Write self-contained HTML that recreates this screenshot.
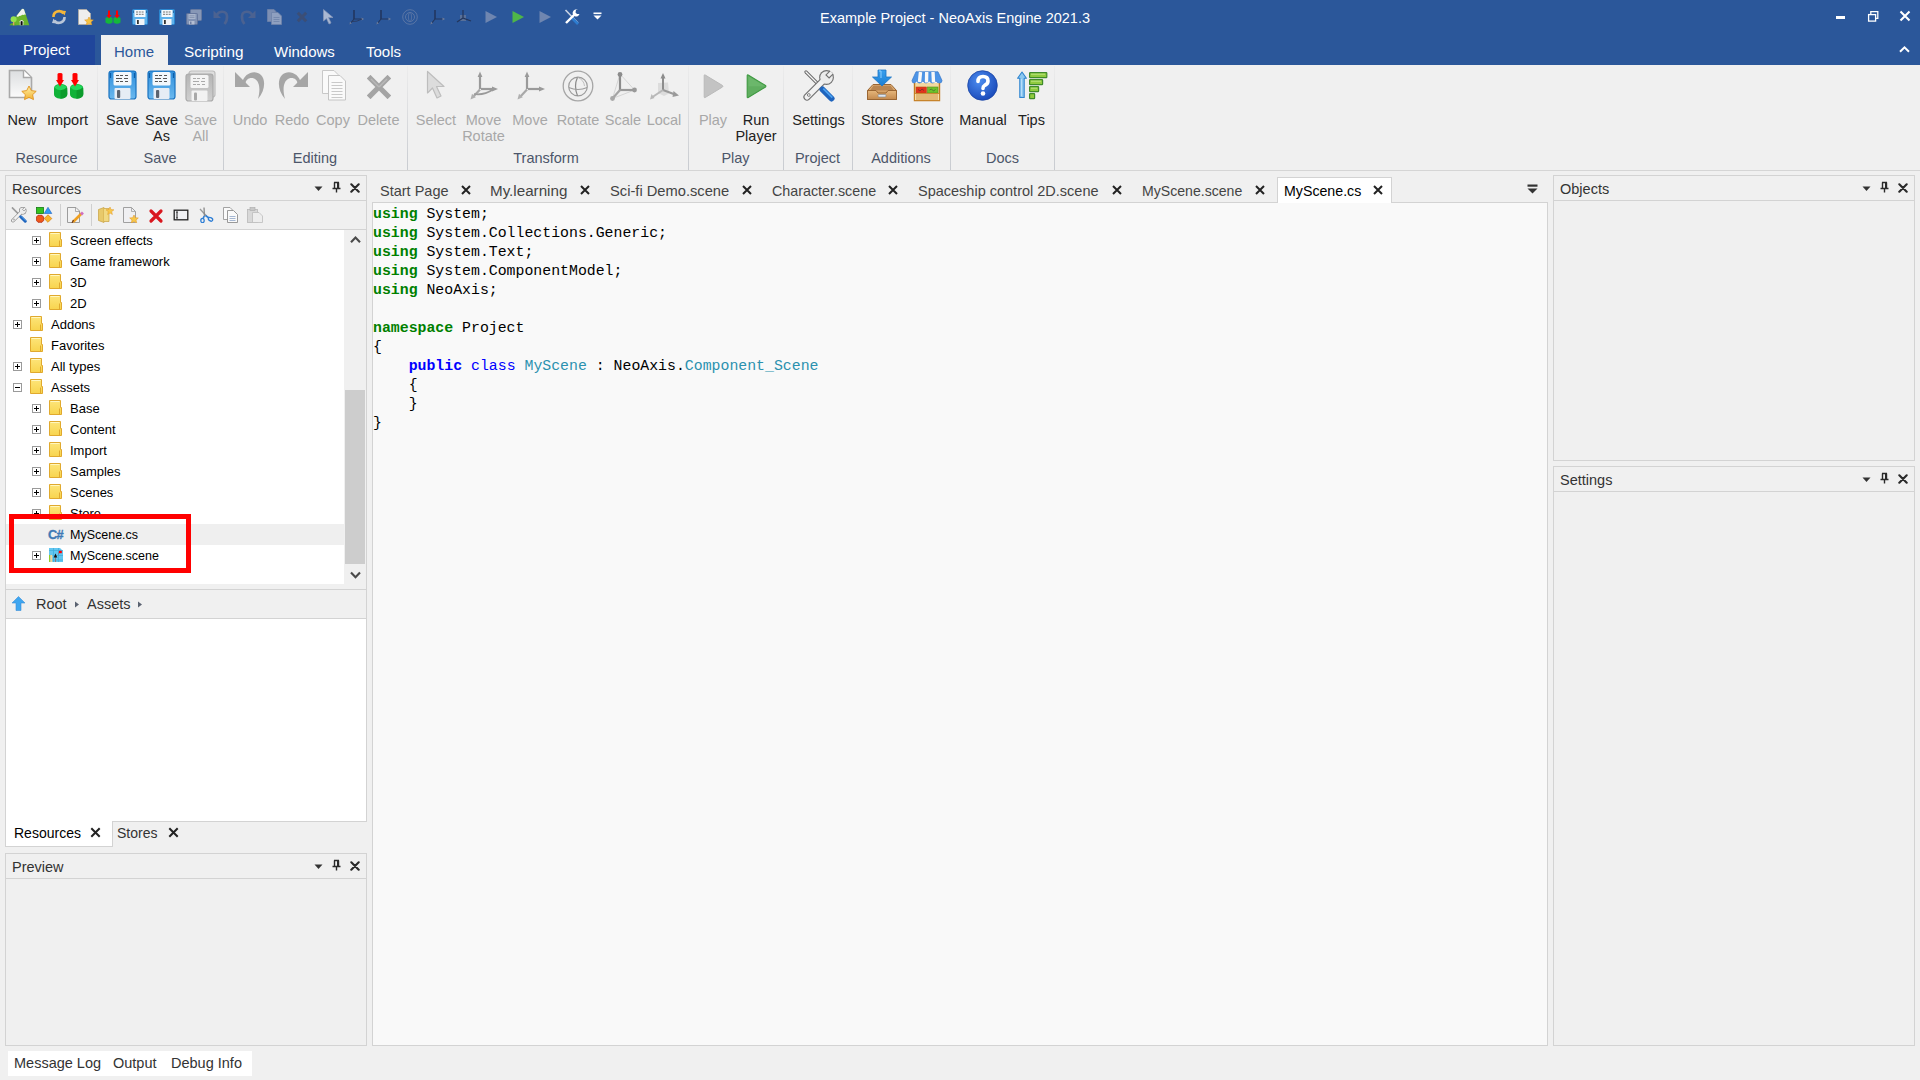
<!DOCTYPE html>
<html><head><meta charset="utf-8">
<style>
*{margin:0;padding:0;box-sizing:border-box}
html,body{width:1920px;height:1080px;overflow:hidden;background:#f0f0f0;font-family:"Liberation Sans",sans-serif;position:relative}
.a{position:absolute;display:block}
.t{position:absolute;white-space:nowrap;line-height:16px}
.code{font-family:"Liberation Mono",monospace;font-size:14.85px;line-height:19px;white-space:pre;color:#000}
.kw{color:#008000;font-weight:bold}
.kb{color:#0000ff;font-weight:bold}
.kc{color:#0000ff}
.ty{color:#2b91af}
</style></head><body>
<svg width="0" height="0" style="position:absolute"><defs>
<linearGradient id="gPage" x1="0" y1="0" x2="0" y2="1"><stop offset="0" stop-color="#dcdee0"/><stop offset="1" stop-color="#fbfbfb"/></linearGradient>
<linearGradient id="gStar" x1="0" y1="0" x2="0" y2="1"><stop offset="0" stop-color="#fff2a8"/><stop offset="1" stop-color="#f2b233"/></linearGradient>
<linearGradient id="gCube" x1="0" y1="0" x2="0" y2="1"><stop offset="0" stop-color="#1fd45a"/><stop offset="1" stop-color="#0aa82a"/></linearGradient>
<linearGradient id="gSave" x1="0" y1="0" x2="0" y2="1"><stop offset="0" stop-color="#2f8fdc"/><stop offset="1" stop-color="#6ab8ee"/></linearGradient>
<linearGradient id="gSaveG" x1="0" y1="0" x2="0" y2="1"><stop offset="0" stop-color="#b4b4b4"/><stop offset="1" stop-color="#cfcfcf"/></linearGradient>
<linearGradient id="gPlay" x1="0" y1="0" x2="1" y2="0"><stop offset="0" stop-color="#2fa83a"/><stop offset="1" stop-color="#5cc85a"/></linearGradient>
<linearGradient id="gBox" x1="0" y1="0" x2="0" y2="1"><stop offset="0" stop-color="#e6b77c"/><stop offset="1" stop-color="#c48a4e"/></linearGradient>
<linearGradient id="gArrow" x1="0" y1="0" x2="0" y2="1"><stop offset="0" stop-color="#3aa0ee"/><stop offset="1" stop-color="#1b7fd4"/></linearGradient>
<radialGradient id="gHelp" cx="0.4" cy="0.35" r="0.7"><stop offset="0" stop-color="#4d8df0"/><stop offset="1" stop-color="#1848b8"/></radialGradient>
<linearGradient id="gFold" x1="0" y1="0" x2="0" y2="1"><stop offset="0" stop-color="#fde57a"/><stop offset="1" stop-color="#f8d44e"/></linearGradient>
</defs></svg>
<div class="a" style="left:0px;top:0px;width:1920px;height:65px;background:#2b579a"></div>
<div class="a" style="left:0px;top:35px;width:95px;height:30px;background:#20469b"></div>
<div class="a" style="left:101px;top:35px;width:67px;height:31px;background:#f0f0f0"></div>
<div class="t" style="left:23px;top:42px;font-size:15px;color:#fff;">Project</div>
<div class="t" style="left:114px;top:44px;font-size:15px;color:#2b579a;">Home</div>
<div class="t" style="left:184px;top:44px;font-size:15.3px;color:#fff;">Scripting</div>
<div class="t" style="left:274px;top:44px;font-size:15px;color:#fff;">Windows</div>
<div class="t" style="left:366px;top:44px;font-size:15px;color:#fff;">Tools</div>
<div class="t" style="left:820px;top:10px;font-size:14.5px;color:#fff;">Example Project - NeoAxis Engine 2021.3</div>
<svg class="a" style="left:9px;top:8px" width="21" height="18" viewBox="0 0 21 18"><path d="M3 17.3 L7 8.5 L12.5 1.5 Q14 0 15 1.5 L17 7 L20.3 17.3Z" fill="#6cb52c"/><path d="M7.5 8 L12.5 1.5 Q14 0 15 1.5 L16.8 6.8 Q15.5 6 14.5 7 Q13 6.5 12 7.8 Q10 7.5 9 9 Q8 8.5 7.5 8Z" fill="#f2f2f2"/><path d="M0.3 17.3 Q1.5 14.8 5 14.8 L8 17.3Z" fill="#5fae24"/><circle cx="4.6" cy="11.2" r="3" fill="#92e34c"/><rect x="4" y="13.8" width="1.3" height="3.5" fill="#d9a366"/><path d="M10.8 17.3 V13.3 Q12.6 10.8 14.4 13.3 V17.3Z" fill="#e6e6e6"/><path d="M11.6 17.3 V13.6 Q12.6 12.2 13.6 13.6 V17.3Z" fill="#0a0a0a"/></svg>
<div class="a" style="left:1836px;top:16px;width:9px;height:3px;background:#fff"></div>
<svg class="a" style="left:1867px;top:10px" width="13" height="13" viewBox="0 0 13 13"><rect x="1.6" y="4.6" width="7" height="6.5" fill="none" stroke="#fff" stroke-width="1.3"/><path d="M3.8 4.6V1.6H10.8V8.3H8.6" fill="none" stroke="#fff" stroke-width="1.3"/></svg>
<svg class="a" style="left:1899px;top:10px" width="12" height="12" viewBox="0 0 12 12"><path d="M1.5 1.5L10.5 10.5M10.5 1.5L1.5 10.5" stroke="#fff" stroke-width="2.1"/></svg>
<svg class="a" style="left:1899px;top:45px" width="11" height="8" viewBox="0 0 11 8"><path d="M1 6.8L5.5 2.3L10 6.8" fill="none" stroke="#fff" stroke-width="2"/></svg>
<div class="a" style="left:0px;top:65px;width:1920px;height:106px;background:#f0f0f0;border-bottom:1px solid #d5d5d5"></div>
<div class="a" style="left:97px;top:66px;width:1px;height:104px;background:linear-gradient(#ececec,#c8cbd0)"></div>
<div class="a" style="left:223px;top:66px;width:1px;height:104px;background:linear-gradient(#ececec,#c8cbd0)"></div>
<div class="a" style="left:407px;top:66px;width:1px;height:104px;background:linear-gradient(#ececec,#c8cbd0)"></div>
<div class="a" style="left:688px;top:66px;width:1px;height:104px;background:linear-gradient(#ececec,#c8cbd0)"></div>
<div class="a" style="left:783px;top:66px;width:1px;height:104px;background:linear-gradient(#ececec,#c8cbd0)"></div>
<div class="a" style="left:852px;top:66px;width:1px;height:104px;background:linear-gradient(#ececec,#c8cbd0)"></div>
<div class="a" style="left:950px;top:66px;width:1px;height:104px;background:linear-gradient(#ececec,#c8cbd0)"></div>
<div class="a" style="left:1054px;top:66px;width:1px;height:104px;background:linear-gradient(#ececec,#c8cbd0)"></div>
<svg class="a" style="left:8px;top:69px" width="32" height="32" viewBox="0 0 32 32"><path d="M1.5 1.5H16.5L23.5 8.5V28.5H1.5Z" fill="url(#gPage)" stroke="#a9a9a9" stroke-width="1.6"/><path d="M15.5 1.5V8.5H23" fill="#fff" stroke="#a9a9a9" stroke-width="1.4"/><path d="M21 17 L23.3 21.6 L28.2 22.3 L24.6 25.7 L25.5 30.6 L21 28.3 L16.5 30.6 L17.4 25.7 L13.8 22.3 L18.7 21.6Z" fill="url(#gStar)" stroke="#e39a2a" stroke-width="1"/></svg>
<div class="t" style="left:-28px;width:100px;text-align:center;top:112px;font-size:14.5px;color:#222">New</div>
<svg class="a" style="left:51px;top:69px" width="34" height="32" viewBox="0 0 34 32"><path d="M3.0 19.5 Q3.0 16.5 6.0 15.5 L9.5 14.8 L13.0 15.5 Q16.3 16.5 16.3 19.5 L16.3 25 Q16.3 28 12.5 29.3 L9.5 29.8 L6.5 29.3 Q3.0 28 3.0 25Z" fill="#10b238"/><path d="M3.5 18.5 Q4.5 16 9.5 15.2 Q14.5 16 15.8 18.5 Q13.5 21 9.5 21.3 Q5.5 21 3.5 18.5Z" fill="#22d85c"/><path d="M9.5 21.3 Q13.5 21 16.0 18.5 L16.3 25 Q16.3 28 12.5 29.3 L9.5 29.8Z" fill="#0c9c2c"/><path d="M19.0 19.5 Q19.0 16.5 22.0 15.5 L25.5 14.8 L29.0 15.5 Q32.3 16.5 32.3 19.5 L32.3 25 Q32.3 28 28.5 29.3 L25.5 29.8 L22.5 29.3 Q19.0 28 19.0 25Z" fill="#10b238"/><path d="M19.5 18.5 Q20.5 16 25.5 15.2 Q30.5 16 31.8 18.5 Q29.5 21 25.5 21.3 Q21.5 21 19.5 18.5Z" fill="#22d85c"/><path d="M25.5 21.3 Q29.5 21 32.0 18.5 L32.3 25 Q32.3 28 28.5 29.3 L25.5 29.8Z" fill="#0c9c2c"/><path d="M6.5 5 Q6.5 4 9 4 Q11.5 4 11.5 5 V11 H13 L9 17.5 L5 11 H6.5Z" fill="#f00"/><path d="M21.5 5 Q21.5 4 24 4 Q26.5 4 26.5 5 V11 H28 L24 17.5 L20 11 H21.5Z" fill="#f00"/></svg>
<div class="t" style="left:17.5px;width:100px;text-align:center;top:112px;font-size:14.5px;color:#222">Import</div>
<div class="t" style="left:-13.5px;width:120px;text-align:center;top:150px;font-size:14.5px;color:#4c566a">Resource</div>
<svg class="a" style="left:108px;top:70px" width="30" height="30" viewBox="0 0 30 30"><rect x="1" y="1" width="27" height="28" rx="2.5" fill="url(#gSave)" stroke="#1a73c0" stroke-width="1.2"/><rect x="5.5" y="2" width="18" height="13.5" rx="1.5" fill="#f3f8fc"/><path d="M8 5.5h3M12 5.5h3M17 5.5h3M8 8.5h6M16 8.5h4M8 11.5h3M12 11.5h3M17 11.5h3" stroke="#555" stroke-width="1.1"/><rect x="6.5" y="18" width="16" height="11" rx="1" fill="#e6edf5"/><rect x="9" y="20" width="3.2" height="8" rx="1" fill="#5a6470"/><path d="M2.5 3v5M26.5 3v5" stroke="#0c5ea8" stroke-width="1.2"/></svg>
<div class="t" style="left:72.5px;width:100px;text-align:center;top:112px;font-size:14.5px;color:#222">Save</div>
<svg class="a" style="left:147px;top:70px" width="30" height="30" viewBox="0 0 30 30"><rect x="1" y="1" width="27" height="28" rx="2.5" fill="url(#gSave)" stroke="#1a73c0" stroke-width="1.2"/><rect x="5.5" y="2" width="18" height="13.5" rx="1.5" fill="#f3f8fc"/><path d="M8 5.5h3M12 5.5h3M17 5.5h3M8 8.5h6M16 8.5h4M8 11.5h3M12 11.5h3M17 11.5h3" stroke="#555" stroke-width="1.1"/><rect x="6.5" y="18" width="16" height="11" rx="1" fill="#e6edf5"/><rect x="9" y="20" width="3.2" height="8" rx="1" fill="#5a6470"/><path d="M2.5 3v5M26.5 3v5" stroke="#0c5ea8" stroke-width="1.2"/></svg>
<div class="t" style="left:111.5px;width:100px;text-align:center;top:112px;font-size:14.5px;color:#222">Save</div><div class="t" style="left:111.5px;width:100px;text-align:center;top:128px;font-size:14.5px;color:#222">As</div>
<svg class="a" style="left:185px;top:70px" width="32" height="32" viewBox="0 0 32 32"><rect x="4" y="1" width="26" height="26" rx="2.5" fill="#dedede" stroke="#bdbdbd" stroke-width="1.2"/><rect x="1" y="4" width="27" height="27" rx="2.5" fill="url(#gSaveG)" stroke="#aaa" stroke-width="1.2"/><rect x="5.5" y="5" width="18" height="13" rx="1.5" fill="#f4f4f4"/><path d="M8 8.5h3M12 8.5h3M17 8.5h3M8 11.5h6M16 11.5h4M8 14.5h3M12 14.5h3M17 14.5h3" stroke="#aaa" stroke-width="1"/><rect x="6.5" y="20.5" width="16" height="10.5" rx="1" fill="#f2f2f2"/><rect x="9" y="22.5" width="3" height="8" rx="1" fill="#a8a8a8"/></svg>
<div class="t" style="left:150.5px;width:100px;text-align:center;top:112px;font-size:14.5px;color:#a8a8a8">Save</div><div class="t" style="left:150.5px;width:100px;text-align:center;top:128px;font-size:14.5px;color:#a8a8a8">All</div>
<div class="t" style="left:100px;width:120px;text-align:center;top:150px;font-size:14.5px;color:#4c566a">Save</div>
<svg class="a" style="left:234px;top:70px" width="32" height="32" viewBox="0 0 32 32"><g><path d="M8 13 C10 3 21 -1 27 5 C32 10 31 21 24 29 C26.5 20 26 11 20 8.5 C15.5 7 12 9.5 11.5 13Z" fill="#a6a6a6"/><path d="M1 2 L1 17 L16 17Z" fill="#a6a6a6"/></g></svg>
<div class="t" style="left:200px;width:100px;text-align:center;top:112px;font-size:14.5px;color:#a8a8a8">Undo</div>
<svg class="a" style="left:277px;top:70px" width="32" height="32" viewBox="0 0 32 32"><g transform="translate(32 0) scale(-1 1)"><path d="M8 13 C10 3 21 -1 27 5 C32 10 31 21 24 29 C26.5 20 26 11 20 8.5 C15.5 7 12 9.5 11.5 13Z" fill="#a6a6a6"/><path d="M1 2 L1 17 L16 17Z" fill="#a6a6a6"/></g></svg>
<div class="t" style="left:242px;width:100px;text-align:center;top:112px;font-size:14.5px;color:#a8a8a8">Redo</div>
<svg class="a" style="left:321px;top:69px" width="26" height="32" viewBox="0 0 26 32"><path d="M1.5 1.5H13L17 5.5V24.5H1.5Z" fill="#fafafa" stroke="#c8c8c8" stroke-width="1"/><path d="M7.5 6.5H19L24.5 12V31H7.5Z" fill="#fafafa" stroke="#c4c4c4" stroke-width="1"/><path d="M10.5 13.5h11M10.5 16.5h11M10.5 19.5h11M10.5 22.5h11M10.5 25.5h11M10.5 28.5h11" stroke="#c9c9c9" stroke-width="1"/></svg>
<div class="t" style="left:283px;width:100px;text-align:center;top:112px;font-size:14.5px;color:#a8a8a8">Copy</div>
<svg class="a" style="left:367px;top:75px" width="24" height="24" viewBox="0 0 24 24"><path d="M3.5 3.5 L20.5 20.5 M20.5 3.5 L3.5 20.5" stroke="#a4a4a4" stroke-width="5.2" stroke-linecap="square"/><path d="M4 4 L12 12 M20 4 L12 12" stroke="#b8b8b8" stroke-width="1.5"/></svg>
<div class="t" style="left:328.5px;width:100px;text-align:center;top:112px;font-size:14.5px;color:#a8a8a8">Delete</div>
<div class="t" style="left:255px;width:120px;text-align:center;top:150px;font-size:14.5px;color:#4c566a">Editing</div>
<svg class="a" style="left:426px;top:70px" width="20" height="30" viewBox="0 0 20 30"><path d="M1.5 1.5 L1.5 23 L6.5 18 L11 28 L15 26 L10.5 16.5 L18 16.5Z" fill="#dcdcdc" stroke="#bdbdbd" stroke-width="1.2" stroke-linejoin="round"/></svg>
<div class="t" style="left:386px;width:100px;text-align:center;top:112px;font-size:14.5px;color:#a8a8a8">Select</div>
<svg class="a" style="left:469px;top:70px" width="32" height="32" viewBox="0 0 32 32"><path d="M11 5V19" stroke="#9a9a9a" stroke-width="2.2"/><path d="M8.6 7 L11 1.5 L13.4 7Z" fill="#9a9a9a"/><path d="M12 19H24" stroke="#9a9a9a" stroke-width="2.2"/><path d="M23 16.6 L29 19 L23 21.4Z" fill="#9a9a9a"/><path d="M11 19.5 L4.5 26.5" stroke="#a8a8a8" stroke-width="2.2"/><path d="M1.5 29.5 L3 23.8 L6.8 27.2Z" fill="#b0b0b0"/><path d="M5 24 Q15 25.5 24 19.5" stroke="#9a9a9a" stroke-width="1.7" fill="none"/></svg>
<div class="t" style="left:433.5px;width:100px;text-align:center;top:112px;font-size:14.5px;color:#a8a8a8">Move</div><div class="t" style="left:433.5px;width:100px;text-align:center;top:128px;font-size:14.5px;color:#a8a8a8">Rotate</div>
<svg class="a" style="left:516px;top:70px" width="32" height="32" viewBox="0 0 32 32"><path d="M11 5V19" stroke="#9a9a9a" stroke-width="2.2"/><path d="M8.6 7 L11 1.5 L13.4 7Z" fill="#9a9a9a"/><path d="M12 19H24" stroke="#9a9a9a" stroke-width="2.2"/><path d="M23 16.6 L29 19 L23 21.4Z" fill="#9a9a9a"/><path d="M11 19.5 L4.5 26.5" stroke="#a8a8a8" stroke-width="2.2"/><path d="M1.5 29.5 L3 23.8 L6.8 27.2Z" fill="#b0b0b0"/></svg>
<div class="t" style="left:480px;width:100px;text-align:center;top:112px;font-size:14.5px;color:#a8a8a8">Move</div>
<svg class="a" style="left:562px;top:70px" width="32" height="32" viewBox="0 0 32 32"><circle cx="16" cy="16" r="14.8" fill="none" stroke="#a6a6a6" stroke-width="1.3"/><circle cx="16" cy="16.5" r="9.3" fill="none" stroke="#9c9c9c" stroke-width="1.2"/><path d="M15.5 7.2 Q11.5 16 15.5 25.7" fill="none" stroke="#8a8a8a" stroke-width="1.2"/><path d="M6.8 17.5 Q16 21.5 25.2 17.5" fill="none" stroke="#9c9c9c" stroke-width="1.1"/><path d="M15.5 7.2 Q22 10 22.5 16" fill="none" stroke="#b4b4b4" stroke-width="0.8"/></svg>
<div class="t" style="left:528px;width:100px;text-align:center;top:112px;font-size:14.5px;color:#a8a8a8">Rotate</div>
<svg class="a" style="left:609px;top:71px" width="32" height="32" viewBox="0 0 32 32"><path d="M11 3L25.5 19M11 3L3.5 27.5M3.5 27.5L25.5 19" stroke="#c8c8c8" stroke-width="0.7" fill="none"/><path d="M11 3.5V19" stroke="#8c8c8c" stroke-width="2.2" fill="none"/><path d="M11 19H25" stroke="#999" stroke-width="2.2" fill="none"/><path d="M11 19L3.5 27.5" stroke="#a4a4a4" stroke-width="2.2" fill="none"/><circle cx="11" cy="3.5" r="2.4" fill="#8c8c8c"/><circle cx="25.5" cy="19" r="2.4" fill="#999"/><circle cx="3.5" cy="27.5" r="2.4" fill="#a8a8a8"/></svg>
<div class="t" style="left:573px;width:100px;text-align:center;top:112px;font-size:14.5px;color:#a8a8a8">Scale</div>
<svg class="a" style="left:649px;top:72px" width="32" height="32" viewBox="0 0 32 32"><path d="M9 11 L19 10.5 L20 21.5 L15 24 L9 21Z" fill="#d9d9d9" opacity="0.9"/><path d="M14 4V18" stroke="#8c8c8c" stroke-width="2"/><path d="M11.5 6.5 L14 1 L16.5 6.5Z" fill="#8c8c8c"/><path d="M14 18L26 22.5" stroke="#9a9a9a" stroke-width="2"/><path d="M24.5 19 L30 23.5 L23.5 25Z" fill="#9a9a9a"/><path d="M14 18L3.5 25" stroke="#b8b8b8" stroke-width="2"/><path d="M1 27.5 L2.5 22 L5.5 26Z" fill="#b8b8b8"/></svg>
<div class="t" style="left:614px;width:100px;text-align:center;top:112px;font-size:14.5px;color:#a8a8a8">Local</div>
<div class="t" style="left:486px;width:120px;text-align:center;top:150px;font-size:14.5px;color:#4c566a">Transform</div>
<svg class="a" style="left:703px;top:74px" width="21" height="25" viewBox="0 0 21 25"><path d="M1.2 1.5 Q1.2 0.5 2.2 1 L19.5 11.5 Q20.3 12.2 19.5 13 L2.2 23.5 Q1.2 24 1.2 23Z" fill="#c3c3c3" stroke="#bababa" stroke-width="1"/></svg>
<div class="t" style="left:663px;width:100px;text-align:center;top:112px;font-size:14.5px;color:#a8a8a8">Play</div>
<svg class="a" style="left:746px;top:74px" width="21" height="25" viewBox="0 0 21 25"><path d="M1.2 1.5 Q1.2 0.5 2.2 1 L19.5 11.5 Q20.3 12.2 19.5 13 L2.2 23.5 Q1.2 24 1.2 23Z" fill="#60ae60" stroke="#3f9a42" stroke-width="1.1"/><path d="M2.5 12.2 L19 12.2 L2.5 2.5Z" fill="#70bb70" opacity="0.7"/></svg>
<div class="t" style="left:706px;width:100px;text-align:center;top:112px;font-size:14.5px;color:#222">Run</div><div class="t" style="left:706px;width:100px;text-align:center;top:128px;font-size:14.5px;color:#222">Player</div>
<div class="t" style="left:675.5px;width:120px;text-align:center;top:150px;font-size:14.5px;color:#4c566a">Play</div>
<svg class="a" style="left:803px;top:70px" width="32" height="32" viewBox="0 0 32 32"><path d="M3 2 L16 15" stroke="#6a6a6a" stroke-width="3.2" stroke-linecap="round"/><path d="M3 2 L16 15" stroke="#f6f6f6" stroke-width="1.3" stroke-linecap="round"/><path d="M4 27 L19 12" stroke="#707070" stroke-width="7.2" stroke-linecap="round"/><circle cx="23.5" cy="7.5" r="7.4" fill="#707070"/><path d="M4 27 L19 12" stroke="#f2f2f2" stroke-width="5" stroke-linecap="round"/><circle cx="23.5" cy="7.5" r="6.3" fill="#ececec"/><path d="M27.1 0.8 L23 4.9 L26.1 8 L30.2 3.9" fill="#f0f0f0" stroke="#707070" stroke-width="1.1"/><circle cx="5.8" cy="25" r="1.4" fill="none" stroke="#777" stroke-width="0.9"/><path d="M19.5 19.5 L28.5 28.5" stroke="#1f64bd" stroke-width="6" stroke-linecap="round"/><path d="M20.3 18.7 L29.3 27.7" stroke="#4aa0ef" stroke-width="1.8"/></svg>
<div class="t" style="left:768.5px;width:100px;text-align:center;top:112px;font-size:14.5px;color:#222">Settings</div>
<div class="t" style="left:757.5px;width:120px;text-align:center;top:150px;font-size:14.5px;color:#4c566a">Project</div>
<svg class="a" style="left:866px;top:69px" width="32" height="32" viewBox="0 0 32 32"><path d="M7 15.5 H25 L30.5 21.5 V30.5 H1.5 V21.5Z" fill="url(#gBox)" stroke="#9a6633" stroke-width="1"/><path d="M7.5 16.5 H24.5 L28 21.5 H4Z" fill="#b98652"/><path d="M1.5 21.5 H10 L12 24 H20 L22 21.5 H30.5 V30.5 H1.5Z" fill="url(#gBox)" stroke="#9a6633" stroke-width="1"/><rect x="12" y="25.5" width="8" height="2.5" rx="1" fill="#dfe6ee" stroke="#7d8790" stroke-width="0.6"/><path d="M12 1 H20 V8 H25.5 L16 17 L6.5 8 H12Z" fill="url(#gArrow)" stroke="#1d74c4" stroke-width="0.8"/><path d="M13 2 H15 V9" stroke="#8fd0ff" stroke-width="1" fill="none"/></svg>
<div class="t" style="left:832px;width:100px;text-align:center;top:112px;font-size:14.5px;color:#222">Stores</div>
<svg class="a" style="left:911px;top:71px" width="32" height="32" viewBox="0 0 32 32"><path d="M3.5 12 V29.5 H28.5 V12" fill="#f3d9a0" stroke="#c27a1e" stroke-width="1.4"/><rect x="5" y="16" width="10.5" height="6" fill="#e3321c" stroke="#b84a1a" stroke-width="0.6"/><rect x="16.5" y="16" width="10.5" height="6" fill="#6cc22b" stroke="#5a8a1a" stroke-width="0.6"/><path d="M7 18.5 L9 20 L11 18 L13 19.5M18.5 19 L20.5 18 L22.5 20 L24.5 18.5" stroke="#333" stroke-width="0.5" fill="none"/><rect x="3.5" y="22.5" width="25" height="7" fill="#f6dca4" stroke="#c27a1e" stroke-width="0.8"/><path d="M6 23v6M8 23v6M10 23v6M12 23v6M14 23v6M16 23v6M18 23v6M20 23v6M22 23v6M24 23v6M26 23v6" stroke="#c98a3a" stroke-width="0.9"/><path d="M5 0.8 H27 L31 9.5 Q31 12 28.5 12 Q26 12 25 9.8 Q23.5 12 21.5 12 Q19.5 12 18.5 9.8 Q17 12 15 12 Q13 12 12 9.8 Q10.5 12 8.5 12 Q6.5 12 5.5 9.8 Q4.5 12 3 12 Q1 12 1 9.5Z" fill="#4d94e6" stroke="#3777c9" stroke-width="0.7"/><path d="M9.5 1 L8.5 11 M15.7 1 L15.5 11.5 M22 1 L22.5 11.5" stroke="#f8f8f8" stroke-width="3.4"/></svg>
<div class="t" style="left:876.5px;width:100px;text-align:center;top:112px;font-size:14.5px;color:#222">Store</div>
<div class="t" style="left:841px;width:120px;text-align:center;top:150px;font-size:14.5px;color:#4c566a">Additions</div>
<svg class="a" style="left:967px;top:70px" width="32" height="32" viewBox="0 0 32 32"><circle cx="15.5" cy="15.5" r="14.8" fill="url(#gHelp)" stroke="#1b45a5" stroke-width="0.8"/><path d="M11 11.5 Q11 6.5 16 6.5 Q21 6.5 21 11 Q21 14 17.5 15.5 Q16 16.3 16 18.5" fill="none" stroke="#fff" stroke-width="3.6" stroke-linecap="round"/><circle cx="16" cy="23.5" r="2.3" fill="#fff"/></svg>
<div class="t" style="left:933px;width:100px;text-align:center;top:112px;font-size:14.5px;color:#222">Manual</div>
<svg class="a" style="left:1017px;top:70px" width="32" height="32" viewBox="0 0 32 32"><path d="M2.8 27.5 V8.2 H0.6 L5 2 L9.4 8.2 H7.2 V27.5Z" fill="#8cc8f0" stroke="#2f84cf" stroke-width="1.1" stroke-linejoin="round"/><path d="M4.3 9 V26" stroke="#cfeaff" stroke-width="0.8"/><rect x="12.6" y="2.6" width="17.2" height="5" rx="0.6" fill="#8fcb3e" stroke="#3f8a2a" stroke-width="1.2"/><rect x="12.6" y="9.6" width="13" height="5" rx="0.6" fill="#8fcb3e" stroke="#3f8a2a" stroke-width="1.2"/><rect x="12.6" y="16.6" width="9" height="5" rx="0.6" fill="#8fcb3e" stroke="#3f8a2a" stroke-width="1.2"/><rect x="12.6" y="23.6" width="5" height="5" rx="0.6" fill="#8fcb3e" stroke="#3f8a2a" stroke-width="1.2"/><path d="M14 4.2H28M14 11.2H24M14 18.2H20" stroke="#c8ec90" stroke-width="0.8"/></svg>
<div class="t" style="left:981.5px;width:100px;text-align:center;top:112px;font-size:14.5px;color:#222">Tips</div>
<div class="t" style="left:942.5px;width:120px;text-align:center;top:150px;font-size:14.5px;color:#4c566a">Docs</div>
<div class="a" style="left:5px;top:175px;width:362px;height:647px;border:1px solid #d3d3d3;background:#f0f0f0"></div>
<div class="a" style="left:5px;top:175px;width:362px;height:26px;border:1px solid #d3d3d3;border-bottom:1px solid #d3d3d3;background:#f0f0f0"></div><div class="t" style="left:12px;top:181px;font-size:14.5px;color:#333;">Resources</div><svg class="a" style="left:314px;top:186px" width="9" height="6" viewBox="0 0 9 6"><path d="M0.5 0.5H8.5L4.5 5Z" fill="#333"/></svg><svg class="a" style="left:332px;top:181px" width="9" height="12" viewBox="0 0 9 12"><path d="M2 1.5H7M2.5 1.5V7.5M6.5 1.5V7.5M0.5 7.5H8.5M4.5 7.5V11.5" stroke="#2a2a2a" stroke-width="1.4" fill="none"/><rect x="5" y="1.5" width="1.8" height="6" fill="#2a2a2a"/></svg><svg class="a" style="left:350px;top:183px" width="10" height="10" viewBox="0 0 10 10"><path d="M1.3 1.3L8.7 8.7M8.7 1.3L1.3 8.7" stroke="#2a2a2a" stroke-width="2.1" stroke-linecap="round"/></svg>
<div class="a" style="left:60px;top:204px;width:1px;height:22px;background:#cfcfcf"></div>
<div class="a" style="left:91px;top:204px;width:1px;height:22px;background:#cfcfcf"></div>
<div class="a" style="left:6px;top:229px;width:360px;height:1px;background:#d3d3d3"></div>
<div class="a" style="left:6px;top:230px;width:338px;height:354px;background:#fff"></div>
<div class="a" style="left:344px;top:230px;width:22px;height:354px;background:#f0f0f0"></div>
<div class="a" style="left:345px;top:390px;width:20px;height:174px;background:#cdcdcd"></div>
<svg class="a" style="left:350px;top:235px" width="11" height="9" viewBox="0 0 11 9"><path d="M1 7.3L5.5 2.5L10 7.3" fill="none" stroke="#4a4a4a" stroke-width="2.1"/></svg>
<svg class="a" style="left:350px;top:571px" width="11" height="9" viewBox="0 0 11 9"><path d="M1 1.5L5.5 6.3L10 1.5" fill="none" stroke="#4a4a4a" stroke-width="2.1"/></svg>
<svg class="a" style="left:11px;top:207px" width="16" height="16" viewBox="0 0 32 32"><path d="M3 2 L16 15" stroke="#6a6a6a" stroke-width="3.2" stroke-linecap="round"/><path d="M3 2 L16 15" stroke="#f6f6f6" stroke-width="1.3" stroke-linecap="round"/><path d="M4 27 L19 12" stroke="#707070" stroke-width="7.2" stroke-linecap="round"/><circle cx="23.5" cy="7.5" r="7.4" fill="#707070"/><path d="M4 27 L19 12" stroke="#f2f2f2" stroke-width="5" stroke-linecap="round"/><circle cx="23.5" cy="7.5" r="6.3" fill="#ececec"/><path d="M27.1 0.8 L23 4.9 L26.1 8 L30.2 3.9" fill="#f0f0f0" stroke="#707070" stroke-width="1.1"/><circle cx="5.8" cy="25" r="1.4" fill="none" stroke="#777" stroke-width="0.9"/><path d="M19.5 19.5 L28.5 28.5" stroke="#1f64bd" stroke-width="6" stroke-linecap="round"/><path d="M20.3 18.7 L29.3 27.7" stroke="#4aa0ef" stroke-width="1.8"/></svg>
<svg class="a" style="left:36px;top:207px" width="17" height="16" viewBox="0 0 17 16"><rect x="0.5" y="0.5" width="7" height="6" fill="#33c21e" stroke="#137a13" stroke-width="0.8"/><path d="M8.2 6.5 L12 0.3 L15.8 6.5Z" fill="#2f9cf5" stroke="#1f5fc0" stroke-width="0.6"/><path d="M2 8.3 H6 L7.6 10 V13.5 L6 15.3 H2 L0.4 13.5 V10Z" fill="#f0581a" stroke="#a8200f" stroke-width="0.7"/><path d="M12 7.8 L15.8 11.5 L12 15.3 L8.2 11.5Z" fill="#f7b52e" stroke="#d7800f" stroke-width="0.7"/></svg>
<svg class="a" style="left:67px;top:207px" width="17" height="16" viewBox="0 0 17 16"><path d="M0.5 0.5H9L12.5 4V15.5H0.5Z" fill="#f2f2f2" stroke="#9c9c9c"/><path d="M8.5 0.5V4.5H12.5" fill="none" stroke="#9c9c9c" stroke-width="0.8"/><path d="M6 15 L14.5 6.5" stroke="#f0a020" stroke-width="2.6"/><path d="M14 5.5 L16 7.5" stroke="#d070c0" stroke-width="2.6"/><path d="M5 16 L6.5 13" stroke="#704020" stroke-width="1.2"/></svg>
<svg class="a" style="left:98px;top:207px" width="16" height="16" viewBox="0 0 16 16"><path d="M0.5 2.5 L6 0.5 V15.5 L0.5 13.5Z" fill="#e8c96a" stroke="#c9a040" stroke-width="0.7"/><path d="M6 1.5 H11 V14.5 H6" fill="#f1d982" stroke="#c9a040" stroke-width="0.7"/><path d="M12 0 L13 2.5 L16 2.8 L13.7 4.6 L14.4 7.5 L12 6 L9.6 7.5 L10.3 4.6 L8 2.8 L11 2.5Z" fill="#f7c84a" stroke="#e39a2a" stroke-width="0.5"/></svg>
<svg class="a" style="left:123px;top:207px" width="16" height="16" viewBox="0 0 16 16"><path d="M0.5 0.5H8.5L12.5 4.5V15.5H0.5Z" fill="#f0f0f2" stroke="#a0a0a0"/><path d="M8.5 0.5V4.5H12.5" fill="none" stroke="#a0a0a0" stroke-width="0.8"/><path d="M11 8 L12.3 10.7 L15.3 11 L13 13 L13.7 16 L11 14.5 L8.3 16 L9 13 L6.7 11 L9.7 10.7Z" fill="#f7c84a" stroke="#e39a2a" stroke-width="0.6"/></svg>
<svg class="a" style="left:148px;top:208px" width="16" height="16" viewBox="0 0 16 16"><path d="M3 3 L13 13 M13 3 L3 13" stroke="#d9171e" stroke-width="3.2" stroke-linecap="round"/></svg>
<svg class="a" style="left:173px;top:209px" width="16" height="12" viewBox="0 0 16 12"><rect x="1.2" y="1.2" width="13.6" height="9.6" fill="#f0f1f4" stroke="#222" stroke-width="1.3"/><path d="M4 3.2V8.8M3 3H5M3 9H5" stroke="#111" stroke-width="0.9"/></svg>
<svg class="a" style="left:199px;top:207px" width="16" height="16" viewBox="0 0 16 16"><path d="M1 2 L7.5 9" stroke="#9a9a9a" stroke-width="1.3"/><path d="M5 0.5 L5.5 9.5" stroke="#8a8a8a" stroke-width="1.3"/><path d="M5.2 9 L4 12" stroke="#2f7fd6" stroke-width="1.6"/><path d="M6.5 8.5 L10 11" stroke="#2f7fd6" stroke-width="1.6"/><ellipse cx="3.5" cy="13.5" rx="1.7" ry="2.2" fill="none" stroke="#2f7fd6" stroke-width="1.3"/><ellipse cx="11.5" cy="12.3" rx="2.3" ry="1.6" transform="rotate(30 11.5 12.3)" fill="none" stroke="#2f7fd6" stroke-width="1.3"/></svg>
<svg class="a" style="left:223px;top:207px" width="16" height="16" viewBox="0 0 16 16"><path d="M0.5 0.5H7L9.5 3V12.5H0.5Z" fill="#fafafa" stroke="#9a9a9a" stroke-width="0.9"/><path d="M4.5 3.5H10.5L14.5 7.5V15.5H4.5Z" fill="#fafafa" stroke="#8e8e8e" stroke-width="0.9"/><path d="M6.5 9.5h6M6.5 11.5h6M6.5 13.5h6" stroke="#8fa6c8" stroke-width="0.8"/></svg>
<svg class="a" style="left:247px;top:207px" width="16" height="16" viewBox="0 0 16 16"><rect x="0.5" y="2.5" width="10" height="13" fill="#d8d8d8" stroke="#b8b8b8" stroke-width="0.8"/><rect x="3" y="0.5" width="5" height="3" fill="#c8c8c8" stroke="#aaa" stroke-width="0.6"/><path d="M5.5 5.5H12L15.5 9V15.5H5.5Z" fill="#ededed" stroke="#bdbdbd" stroke-width="0.8"/></svg>
<div class="a" style="left:6px;top:589px;width:360px;height:1px;background:#d3d3d3"></div>
<div class="a" style="left:6px;top:618px;width:360px;height:1px;background:#d3d3d3"></div>
<div class="a" style="left:6px;top:619px;width:360px;height:202px;background:#fff"></div>
<svg class="a" style="left:11px;top:596px" width="15" height="16" viewBox="0 0 15 16"><path d="M7.5 0.5 L14 7 H10 V14.5 H5 V7 H1Z" fill="#3ea6f0" stroke="#3a8fd8" stroke-width="0.6"/></svg>
<div class="t" style="left:36px;top:596px;font-size:14.5px;color:#333;">Root</div>
<svg class="a" style="left:75px;top:601px" width="4" height="7" viewBox="0 0 4 7"><path d="M0 0.5L4 3.5L0 6.5Z" fill="#5a6270"/></svg>
<div class="t" style="left:87px;top:596px;font-size:14.5px;color:#333;">Assets</div>
<svg class="a" style="left:138px;top:601px" width="4" height="7" viewBox="0 0 4 7"><path d="M0 0.5L4 3.5L0 6.5Z" fill="#5a6270"/></svg>
<div class="a" style="left:5px;top:821px;width:108px;height:26px;background:#fff;border:1px solid #d3d3d3;border-top:none"></div>
<div class="a" style="left:113px;top:821px;width:254px;height:1px;background:#d3d3d3"></div>
<div class="t" style="left:14px;top:825px;font-size:14px;color:#000;">Resources</div>
<svg class="a" style="left:90px;top:827px" width="11" height="11" viewBox="0 0 11 11"><path d="M1.3 1.3L9.7 9.7M9.7 1.3L1.3 9.7" stroke="#222" stroke-width="2"/></svg>
<div class="t" style="left:117px;top:825px;font-size:14px;color:#333;">Stores</div>
<svg class="a" style="left:168px;top:827px" width="11" height="11" viewBox="0 0 11 11"><path d="M1.3 1.3L9.7 9.7M9.7 1.3L1.3 9.7" stroke="#222" stroke-width="2"/></svg>
<div class="a" style="left:5px;top:853px;width:362px;height:193px;border:1px solid #d3d3d3;background:#f0f0f0"></div>
<div class="a" style="left:5px;top:853px;width:362px;height:26px;border:1px solid #d3d3d3;border-bottom:1px solid #d3d3d3;background:#f0f0f0"></div><div class="t" style="left:12px;top:859px;font-size:14.5px;color:#333;">Preview</div><svg class="a" style="left:314px;top:864px" width="9" height="6" viewBox="0 0 9 6"><path d="M0.5 0.5H8.5L4.5 5Z" fill="#333"/></svg><svg class="a" style="left:332px;top:859px" width="9" height="12" viewBox="0 0 9 12"><path d="M2 1.5H7M2.5 1.5V7.5M6.5 1.5V7.5M0.5 7.5H8.5M4.5 7.5V11.5" stroke="#2a2a2a" stroke-width="1.4" fill="none"/><rect x="5" y="1.5" width="1.8" height="6" fill="#2a2a2a"/></svg><svg class="a" style="left:350px;top:861px" width="10" height="10" viewBox="0 0 10 10"><path d="M1.3 1.3L8.7 8.7M8.7 1.3L1.3 8.7" stroke="#2a2a2a" stroke-width="2.1" stroke-linecap="round"/></svg>
<div class="a" style="left:1553px;top:175px;width:362px;height:286px;border:1px solid #d3d3d3;background:#f0f0f0"></div>
<div class="a" style="left:1553px;top:175px;width:362px;height:26px;border:1px solid #d3d3d3;border-bottom:1px solid #d3d3d3;background:#f0f0f0"></div><div class="t" style="left:1560px;top:181px;font-size:14.5px;color:#333;">Objects</div><svg class="a" style="left:1862px;top:186px" width="9" height="6" viewBox="0 0 9 6"><path d="M0.5 0.5H8.5L4.5 5Z" fill="#333"/></svg><svg class="a" style="left:1880px;top:181px" width="9" height="12" viewBox="0 0 9 12"><path d="M2 1.5H7M2.5 1.5V7.5M6.5 1.5V7.5M0.5 7.5H8.5M4.5 7.5V11.5" stroke="#2a2a2a" stroke-width="1.4" fill="none"/><rect x="5" y="1.5" width="1.8" height="6" fill="#2a2a2a"/></svg><svg class="a" style="left:1898px;top:183px" width="10" height="10" viewBox="0 0 10 10"><path d="M1.3 1.3L8.7 8.7M8.7 1.3L1.3 8.7" stroke="#2a2a2a" stroke-width="2.1" stroke-linecap="round"/></svg>
<div class="a" style="left:1553px;top:466px;width:362px;height:580px;border:1px solid #d3d3d3;background:#f0f0f0"></div>
<div class="a" style="left:1553px;top:466px;width:362px;height:26px;border:1px solid #d3d3d3;border-bottom:1px solid #d3d3d3;background:#f0f0f0"></div><div class="t" style="left:1560px;top:472px;font-size:14.5px;color:#333;">Settings</div><svg class="a" style="left:1862px;top:477px" width="9" height="6" viewBox="0 0 9 6"><path d="M0.5 0.5H8.5L4.5 5Z" fill="#333"/></svg><svg class="a" style="left:1880px;top:472px" width="9" height="12" viewBox="0 0 9 12"><path d="M2 1.5H7M2.5 1.5V7.5M6.5 1.5V7.5M0.5 7.5H8.5M4.5 7.5V11.5" stroke="#2a2a2a" stroke-width="1.4" fill="none"/><rect x="5" y="1.5" width="1.8" height="6" fill="#2a2a2a"/></svg><svg class="a" style="left:1898px;top:474px" width="10" height="10" viewBox="0 0 10 10"><path d="M1.3 1.3L8.7 8.7M8.7 1.3L1.3 8.7" stroke="#2a2a2a" stroke-width="2.1" stroke-linecap="round"/></svg>
<div class="a" style="left:372px;top:202px;width:1176px;height:844px;border:1px solid #d3d3d3;background:#f9f9f9"></div>
<div class="a" style="left:1277px;top:177px;width:115px;height:26px;background:#fff;border:1px solid #d3d3d3;border-bottom:none"></div>
<div class="t" style="left:380px;top:183px;font-size:14.5px;color:#444;">Start Page</div>
<svg class="a" style="left:461px;top:185px" width="10" height="10" viewBox="0 0 10 10"><path d="M1 1L9 9M9 1L1 9" stroke="#222" stroke-width="2"/></svg>
<div class="t" style="left:490px;top:183px;font-size:15.2px;color:#444;">My.learning</div>
<svg class="a" style="left:580px;top:185px" width="10" height="10" viewBox="0 0 10 10"><path d="M1 1L9 9M9 1L1 9" stroke="#222" stroke-width="2"/></svg>
<div class="t" style="left:610px;top:183px;font-size:14.7px;color:#444;">Sci-fi Demo.scene</div>
<svg class="a" style="left:742px;top:185px" width="10" height="10" viewBox="0 0 10 10"><path d="M1 1L9 9M9 1L1 9" stroke="#222" stroke-width="2"/></svg>
<div class="t" style="left:772px;top:183px;font-size:14.3px;color:#444;">Character.scene</div>
<svg class="a" style="left:888px;top:185px" width="10" height="10" viewBox="0 0 10 10"><path d="M1 1L9 9M9 1L1 9" stroke="#222" stroke-width="2"/></svg>
<div class="t" style="left:918px;top:183px;font-size:14.5px;color:#444;">Spaceship control 2D.scene</div>
<svg class="a" style="left:1112px;top:185px" width="10" height="10" viewBox="0 0 10 10"><path d="M1 1L9 9M9 1L1 9" stroke="#222" stroke-width="2"/></svg>
<div class="t" style="left:1142px;top:183px;font-size:14.1px;color:#444;">MyScene.scene</div>
<svg class="a" style="left:1255px;top:185px" width="10" height="10" viewBox="0 0 10 10"><path d="M1 1L9 9M9 1L1 9" stroke="#222" stroke-width="2"/></svg>
<div class="t" style="left:1284px;top:183px;font-size:14.2px;color:#000;">MyScene.cs</div>
<svg class="a" style="left:1373px;top:185px" width="10" height="10" viewBox="0 0 10 10"><path d="M1 1L9 9M9 1L1 9" stroke="#222" stroke-width="2"/></svg>
<svg class="a" style="left:1527px;top:184px" width="11" height="11" viewBox="0 0 11 11"><rect x="0.5" y="0.5" width="10" height="2.2" fill="#333"/><path d="M0.5 4.5H10.5L5.5 9.5Z" fill="#333"/></svg>
<div class="a code" style="left:373px;top:205px"><span class="kw">using</span> System;
<span class="kw">using</span> System.Collections.Generic;
<span class="kw">using</span> System.Text;
<span class="kw">using</span> System.ComponentModel;
<span class="kw">using</span> NeoAxis;

<span class="kw">namespace</span> Project
{
    <span class="kb">public</span> <span class="kc">class</span> <span class="ty">MyScene</span> : NeoAxis.<span class="ty">Component_Scene</span>
    {
    }
}</div>
<div class="a" style="left:8px;top:1051px;width:244px;height:25px;background:#fff"></div>
<div class="t" style="left:14px;top:1055px;font-size:14.5px;color:#333;">Message Log</div>
<div class="t" style="left:113px;top:1055px;font-size:14.5px;color:#333;">Output</div>
<div class="t" style="left:171px;top:1055px;font-size:14.5px;color:#333;">Debug Info</div>
<div class="a" style="left:6px;top:524px;width:338px;height:21px;background:#efefef"></div>
<svg class="a" style="left:32px;top:236px" width="9" height="9" viewBox="0 0 9 9"><rect x="0.5" y="0.5" width="8" height="8" fill="#fff" stroke="#9a9a9a"/><path d="M2 4.5H7" stroke="#000" stroke-width="1"/><path d="M4.5 2V7" stroke="#000" stroke-width="1"/></svg>
<svg class="a" style="left:49px;top:232px" width="13" height="15" viewBox="0 0 13 15"><path d="M0.5 0.5H11.5V7.5H12.5V14.5H0.5Z" fill="url(#gFold)" stroke="#e0a92e" stroke-width="1"/><path d="M1.5 1.5H10.5" stroke="#fff7c0" stroke-width="1"/><path d="M10.5 8.5V14.5" stroke="#e0a92e" stroke-width="1"/></svg>
<div class="t" style="left:70px;top:233px;font-size:13px;color:#000;">Screen effects</div>
<svg class="a" style="left:32px;top:257px" width="9" height="9" viewBox="0 0 9 9"><rect x="0.5" y="0.5" width="8" height="8" fill="#fff" stroke="#9a9a9a"/><path d="M2 4.5H7" stroke="#000" stroke-width="1"/><path d="M4.5 2V7" stroke="#000" stroke-width="1"/></svg>
<svg class="a" style="left:49px;top:253px" width="13" height="15" viewBox="0 0 13 15"><path d="M0.5 0.5H11.5V7.5H12.5V14.5H0.5Z" fill="url(#gFold)" stroke="#e0a92e" stroke-width="1"/><path d="M1.5 1.5H10.5" stroke="#fff7c0" stroke-width="1"/><path d="M10.5 8.5V14.5" stroke="#e0a92e" stroke-width="1"/></svg>
<div class="t" style="left:70px;top:254px;font-size:13px;color:#000;">Game framework</div>
<svg class="a" style="left:32px;top:278px" width="9" height="9" viewBox="0 0 9 9"><rect x="0.5" y="0.5" width="8" height="8" fill="#fff" stroke="#9a9a9a"/><path d="M2 4.5H7" stroke="#000" stroke-width="1"/><path d="M4.5 2V7" stroke="#000" stroke-width="1"/></svg>
<svg class="a" style="left:49px;top:274px" width="13" height="15" viewBox="0 0 13 15"><path d="M0.5 0.5H11.5V7.5H12.5V14.5H0.5Z" fill="url(#gFold)" stroke="#e0a92e" stroke-width="1"/><path d="M1.5 1.5H10.5" stroke="#fff7c0" stroke-width="1"/><path d="M10.5 8.5V14.5" stroke="#e0a92e" stroke-width="1"/></svg>
<div class="t" style="left:70px;top:275px;font-size:13px;color:#000;">3D</div>
<svg class="a" style="left:32px;top:299px" width="9" height="9" viewBox="0 0 9 9"><rect x="0.5" y="0.5" width="8" height="8" fill="#fff" stroke="#9a9a9a"/><path d="M2 4.5H7" stroke="#000" stroke-width="1"/><path d="M4.5 2V7" stroke="#000" stroke-width="1"/></svg>
<svg class="a" style="left:49px;top:295px" width="13" height="15" viewBox="0 0 13 15"><path d="M0.5 0.5H11.5V7.5H12.5V14.5H0.5Z" fill="url(#gFold)" stroke="#e0a92e" stroke-width="1"/><path d="M1.5 1.5H10.5" stroke="#fff7c0" stroke-width="1"/><path d="M10.5 8.5V14.5" stroke="#e0a92e" stroke-width="1"/></svg>
<div class="t" style="left:70px;top:296px;font-size:13px;color:#000;">2D</div>
<svg class="a" style="left:13px;top:320px" width="9" height="9" viewBox="0 0 9 9"><rect x="0.5" y="0.5" width="8" height="8" fill="#fff" stroke="#9a9a9a"/><path d="M2 4.5H7" stroke="#000" stroke-width="1"/><path d="M4.5 2V7" stroke="#000" stroke-width="1"/></svg>
<svg class="a" style="left:30px;top:316px" width="13" height="15" viewBox="0 0 13 15"><path d="M0.5 0.5H11.5V7.5H12.5V14.5H0.5Z" fill="url(#gFold)" stroke="#e0a92e" stroke-width="1"/><path d="M1.5 1.5H10.5" stroke="#fff7c0" stroke-width="1"/><path d="M10.5 8.5V14.5" stroke="#e0a92e" stroke-width="1"/></svg>
<div class="t" style="left:51px;top:317px;font-size:13px;color:#000;">Addons</div>
<svg class="a" style="left:30px;top:337px" width="13" height="15" viewBox="0 0 13 15"><path d="M0.5 0.5H11.5V7.5H12.5V14.5H0.5Z" fill="url(#gFold)" stroke="#e0a92e" stroke-width="1"/><path d="M1.5 1.5H10.5" stroke="#fff7c0" stroke-width="1"/><path d="M10.5 8.5V14.5" stroke="#e0a92e" stroke-width="1"/></svg>
<div class="t" style="left:51px;top:338px;font-size:13px;color:#000;">Favorites</div>
<svg class="a" style="left:13px;top:362px" width="9" height="9" viewBox="0 0 9 9"><rect x="0.5" y="0.5" width="8" height="8" fill="#fff" stroke="#9a9a9a"/><path d="M2 4.5H7" stroke="#000" stroke-width="1"/><path d="M4.5 2V7" stroke="#000" stroke-width="1"/></svg>
<svg class="a" style="left:30px;top:358px" width="13" height="15" viewBox="0 0 13 15"><path d="M0.5 0.5H11.5V7.5H12.5V14.5H0.5Z" fill="url(#gFold)" stroke="#e0a92e" stroke-width="1"/><path d="M1.5 1.5H10.5" stroke="#fff7c0" stroke-width="1"/><path d="M10.5 8.5V14.5" stroke="#e0a92e" stroke-width="1"/></svg>
<div class="t" style="left:51px;top:359px;font-size:13px;color:#000;">All types</div>
<svg class="a" style="left:13px;top:383px" width="9" height="9" viewBox="0 0 9 9"><rect x="0.5" y="0.5" width="8" height="8" fill="#fff" stroke="#9a9a9a"/><path d="M2 4.5H7" stroke="#000" stroke-width="1"/></svg>
<svg class="a" style="left:30px;top:379px" width="13" height="15" viewBox="0 0 13 15"><path d="M0.5 0.5H11.5V7.5H12.5V14.5H0.5Z" fill="url(#gFold)" stroke="#e0a92e" stroke-width="1"/><path d="M1.5 1.5H10.5" stroke="#fff7c0" stroke-width="1"/><path d="M10.5 8.5V14.5" stroke="#e0a92e" stroke-width="1"/></svg>
<div class="t" style="left:51px;top:380px;font-size:13px;color:#000;">Assets</div>
<svg class="a" style="left:32px;top:404px" width="9" height="9" viewBox="0 0 9 9"><rect x="0.5" y="0.5" width="8" height="8" fill="#fff" stroke="#9a9a9a"/><path d="M2 4.5H7" stroke="#000" stroke-width="1"/><path d="M4.5 2V7" stroke="#000" stroke-width="1"/></svg>
<svg class="a" style="left:49px;top:400px" width="13" height="15" viewBox="0 0 13 15"><path d="M0.5 0.5H11.5V7.5H12.5V14.5H0.5Z" fill="url(#gFold)" stroke="#e0a92e" stroke-width="1"/><path d="M1.5 1.5H10.5" stroke="#fff7c0" stroke-width="1"/><path d="M10.5 8.5V14.5" stroke="#e0a92e" stroke-width="1"/></svg>
<div class="t" style="left:70px;top:401px;font-size:13px;color:#000;">Base</div>
<svg class="a" style="left:32px;top:425px" width="9" height="9" viewBox="0 0 9 9"><rect x="0.5" y="0.5" width="8" height="8" fill="#fff" stroke="#9a9a9a"/><path d="M2 4.5H7" stroke="#000" stroke-width="1"/><path d="M4.5 2V7" stroke="#000" stroke-width="1"/></svg>
<svg class="a" style="left:49px;top:421px" width="13" height="15" viewBox="0 0 13 15"><path d="M0.5 0.5H11.5V7.5H12.5V14.5H0.5Z" fill="url(#gFold)" stroke="#e0a92e" stroke-width="1"/><path d="M1.5 1.5H10.5" stroke="#fff7c0" stroke-width="1"/><path d="M10.5 8.5V14.5" stroke="#e0a92e" stroke-width="1"/></svg>
<div class="t" style="left:70px;top:422px;font-size:13px;color:#000;">Content</div>
<svg class="a" style="left:32px;top:446px" width="9" height="9" viewBox="0 0 9 9"><rect x="0.5" y="0.5" width="8" height="8" fill="#fff" stroke="#9a9a9a"/><path d="M2 4.5H7" stroke="#000" stroke-width="1"/><path d="M4.5 2V7" stroke="#000" stroke-width="1"/></svg>
<svg class="a" style="left:49px;top:442px" width="13" height="15" viewBox="0 0 13 15"><path d="M0.5 0.5H11.5V7.5H12.5V14.5H0.5Z" fill="url(#gFold)" stroke="#e0a92e" stroke-width="1"/><path d="M1.5 1.5H10.5" stroke="#fff7c0" stroke-width="1"/><path d="M10.5 8.5V14.5" stroke="#e0a92e" stroke-width="1"/></svg>
<div class="t" style="left:70px;top:443px;font-size:13px;color:#000;">Import</div>
<svg class="a" style="left:32px;top:467px" width="9" height="9" viewBox="0 0 9 9"><rect x="0.5" y="0.5" width="8" height="8" fill="#fff" stroke="#9a9a9a"/><path d="M2 4.5H7" stroke="#000" stroke-width="1"/><path d="M4.5 2V7" stroke="#000" stroke-width="1"/></svg>
<svg class="a" style="left:49px;top:463px" width="13" height="15" viewBox="0 0 13 15"><path d="M0.5 0.5H11.5V7.5H12.5V14.5H0.5Z" fill="url(#gFold)" stroke="#e0a92e" stroke-width="1"/><path d="M1.5 1.5H10.5" stroke="#fff7c0" stroke-width="1"/><path d="M10.5 8.5V14.5" stroke="#e0a92e" stroke-width="1"/></svg>
<div class="t" style="left:70px;top:464px;font-size:13px;color:#000;">Samples</div>
<svg class="a" style="left:32px;top:488px" width="9" height="9" viewBox="0 0 9 9"><rect x="0.5" y="0.5" width="8" height="8" fill="#fff" stroke="#9a9a9a"/><path d="M2 4.5H7" stroke="#000" stroke-width="1"/><path d="M4.5 2V7" stroke="#000" stroke-width="1"/></svg>
<svg class="a" style="left:49px;top:484px" width="13" height="15" viewBox="0 0 13 15"><path d="M0.5 0.5H11.5V7.5H12.5V14.5H0.5Z" fill="url(#gFold)" stroke="#e0a92e" stroke-width="1"/><path d="M1.5 1.5H10.5" stroke="#fff7c0" stroke-width="1"/><path d="M10.5 8.5V14.5" stroke="#e0a92e" stroke-width="1"/></svg>
<div class="t" style="left:70px;top:485px;font-size:13px;color:#000;">Scenes</div>
<svg class="a" style="left:32px;top:509px" width="9" height="9" viewBox="0 0 9 9"><rect x="0.5" y="0.5" width="8" height="8" fill="#fff" stroke="#9a9a9a"/><path d="M2 4.5H7" stroke="#000" stroke-width="1"/><path d="M4.5 2V7" stroke="#000" stroke-width="1"/></svg>
<svg class="a" style="left:49px;top:505px" width="13" height="15" viewBox="0 0 13 15"><path d="M0.5 0.5H11.5V7.5H12.5V14.5H0.5Z" fill="url(#gFold)" stroke="#e0a92e" stroke-width="1"/><path d="M1.5 1.5H10.5" stroke="#fff7c0" stroke-width="1"/><path d="M10.5 8.5V14.5" stroke="#e0a92e" stroke-width="1"/></svg>
<div class="t" style="left:70px;top:506px;font-size:13px;color:#000;">Store</div>
<div class="t" style="left:48px;top:527px;font-size:12.8px;font-weight:bold;color:#3f7ab6;letter-spacing:-0.7px;-webkit-text-stroke:0.35px #3f7ab6">C#</div>
<div class="t" style="left:70px;top:527px;font-size:12.5px;color:#000;">MyScene.cs</div>
<svg class="a" style="left:32px;top:551px" width="9" height="9" viewBox="0 0 9 9"><rect x="0.5" y="0.5" width="8" height="8" fill="#fff" stroke="#9a9a9a"/><path d="M2 4.5H7" stroke="#000" stroke-width="1"/><path d="M4.5 2V7" stroke="#000" stroke-width="1"/></svg>
<svg class="a" style="left:49px;top:548px" width="14" height="14" viewBox="0 0 14 14"><path d="M0 0H11L14 3V14H0Z" fill="#62c6f0"/><path d="M0 2.5H14M0 7.5H14M0 12H14M4.5 0V14M9.5 0V14" stroke="#3eabd9" stroke-width="0.7"/><rect x="0" y="7" width="1.3" height="7" fill="#8fcc2a"/><rect x="1.3" y="7" width="2" height="7" fill="#f3d59a"/><path d="M6.5 8V14" stroke="#9a6a6a" stroke-width="0.8"/><path d="M4.7 9.5L6.5 5.5L8.3 9.5Z" fill="#111"/><path d="M9.5 6.5L10.2 3" stroke="#a55" stroke-width="0.6"/><rect x="10" y="2.8" width="2.8" height="2.4" fill="#f00"/></svg>
<div class="t" style="left:70px;top:548px;font-size:12.5px;color:#000;">MyScene.scene</div>
<div class="a" style="left:9px;top:514px;width:182px;height:59px;border:5px solid #ff0000"></div>
<svg class="a" style="left:51px;top:9px" width="16" height="16" viewBox="0 0 16 16"><path d="M2.5 8 A5.5 5.5 0 0 1 12.5 4.5" fill="none" stroke="#f4b63a" stroke-width="2.6"/><path d="M10 1.5 L15 2 L13.5 6.5Z" fill="#f4b63a"/><path d="M13.5 8 A5.5 5.5 0 0 1 3.5 11.5" fill="none" stroke="#b9c6d8" stroke-width="2.6"/><path d="M6 14.5 L1 14 L2.5 9.5Z" fill="#b9c6d8"/></svg>
<svg class="a" style="left:78px;top:9px" width="16" height="16" viewBox="0 0 16 16"><path d="M0.5 0.5H8.5L12.5 4.5V15.5H0.5Z" fill="#eee" stroke="#aaa"/><path d="M11 8 L12.3 10.7 L15.3 11 L13 13 L13.7 16 L11 14.5 L8.3 16 L9 13 L6.7 11 L9.7 10.7Z" fill="#f5c342" stroke="#e39a2a" stroke-width="0.6"/></svg>
<svg class="a" style="left:105px;top:9px" width="16" height="16" viewBox="0 0 16 16"><path d="M0.5 9 Q4 7 7.5 9 V13.5 Q4 16 0.5 13.5Z" fill="#14b83a"/><path d="M8.5 9 Q12 7 15.5 9 V13.5 Q12 16 8.5 13.5Z" fill="#14b83a"/><path d="M3 1.5H5V6H6.5L4 9.5L1.5 6H3Z" fill="#f00"/><path d="M11 1.5H13V6H14.5L12 9.5L9.5 6H11Z" fill="#f00"/></svg>
<svg class="a" style="left:132px;top:9px" width="16" height="16" viewBox="0 0 16 16"><rect x="0.5" y="0.5" width="15" height="15" rx="1" fill="#5fb2ec" stroke="#2a86d0"/><rect x="2.5" y="1" width="11" height="7" rx="0.6" fill="#f6f9fc"/><path d="M4 3h2M6.8 3h2M9.6 3h2M4 5.3h2M6.8 5.3h2M9.6 5.3h2" stroke="#666" stroke-width="0.9"/><rect x="3.5" y="10" width="9" height="6" fill="#f2f4f7"/><rect x="5" y="11" width="1.8" height="4" fill="#333"/><path d="M1.5 1.5v2.5M14.5 1.5v2.5" stroke="#1a5a9a" stroke-width="0.8"/></svg>
<svg class="a" style="left:159px;top:9px" width="16" height="16" viewBox="0 0 16 16"><rect x="0.5" y="0.5" width="15" height="15" rx="1" fill="#5fb2ec" stroke="#2a86d0"/><rect x="2.5" y="1" width="11" height="7" rx="0.6" fill="#f6f9fc"/><path d="M4 3h2M6.8 3h2M9.6 3h2M4 5.3h2M6.8 5.3h2M9.6 5.3h2" stroke="#666" stroke-width="0.9"/><rect x="3.5" y="10" width="9" height="6" fill="#f2f4f7"/><rect x="5" y="11" width="1.8" height="4" fill="#333"/><path d="M1.5 1.5v2.5M14.5 1.5v2.5" stroke="#1a5a9a" stroke-width="0.8"/></svg>
<svg class="a" style="left:186px;top:9px" width="16" height="16" viewBox="0 0 16 16"><rect x="4.5" y="0.5" width="11" height="11" rx="0.8" fill="#8797b6" stroke="#6a7ba0" stroke-width="0.8"/><rect x="0.5" y="4.5" width="11" height="11" rx="0.8" fill="#8192b3" stroke="#5f7198" stroke-width="0.8"/><rect x="2.5" y="5" width="7" height="5" fill="#a9b5cc"/><path d="M3.5 6.8h5M3.5 8.5h5" stroke="#7a89a8" stroke-width="0.7"/><rect x="3" y="12" width="5.5" height="3.5" fill="#b3bed3"/><rect x="4.2" y="12.6" width="1.2" height="2.6" fill="#5f7198"/></svg>
<svg class="a" style="left:213px;top:9px" width="16" height="16" viewBox="0 0 16 16"><path d="M3.5 6.5 C6 1.5 13.5 1.5 14 7 C14.3 10 13.5 12.5 11.5 15" fill="none" stroke="#4b6291" stroke-width="2.6"/><path d="M0.5 1.5 L0.5 9 L8 9Z" fill="#4b6291"/></svg>
<svg class="a" style="left:240px;top:9px" width="16" height="16" viewBox="0 0 16 16"><g transform="translate(16 0) scale(-1 1)"><path d="M3.5 6.5 C6 1.5 13.5 1.5 14 7 C14.3 10 13.5 12.5 11.5 15" fill="none" stroke="#4b6291" stroke-width="2.6"/><path d="M0.5 1.5 L0.5 9 L8 9Z" fill="#4b6291"/></g></svg>
<svg class="a" style="left:267px;top:9px" width="16" height="16" viewBox="0 0 16 16"><path d="M0.5 0.5H7L9 2.5V12.5H0.5Z" fill="#7d8fb3" stroke="#6f83aa" stroke-width="0.8"/><path d="M4.5 3.5H11L14.5 7V15.5H4.5Z" fill="#8fa0c0" stroke="#6f83aa" stroke-width="0.8"/><path d="M6.5 8.5h6M6.5 10.5h6M6.5 12.5h6" stroke="#6f83aa" stroke-width="0.8"/></svg>
<svg class="a" style="left:296px;top:11px" width="12" height="12" viewBox="0 0 12 12"><path d="M1.8 1.8L10.2 10.2M10.2 1.8L1.8 10.2" stroke="#3b4e76" stroke-width="3"/></svg>
<svg class="a" style="left:323px;top:9px" width="12" height="16" viewBox="0 0 12 16"><path d="M0.5 0.5 L0.5 12 L3.5 9.5 L6 15 L8 14 L5.5 8.5 L10 8.5Z" fill="#a9b8d3" stroke="#8797b7" stroke-width="0.7"/></svg>
<svg class="a" style="left:349px;top:9px" width="16" height="16" viewBox="0 0 16 16"><path d="M5 1V10" stroke="#1f2f52" stroke-width="1.3"/><path d="M5 10H14M5 10L1 15" stroke="#24365c" stroke-width="1.1" fill="none"/><path d="M12.5 8.5L15 10L12.5 11.5Z" fill="#6f7f9f"/><path d="M0.5 15.5L1 12.8L2.8 14.2Z" fill="#6f7f9f"/><path d="M2.5 12.5 Q8 13 13 10" stroke="#2a3c63" stroke-width="1" fill="none"/></svg>
<svg class="a" style="left:376px;top:9px" width="16" height="16" viewBox="0 0 16 16"><path d="M5 1V10" stroke="#1f2f52" stroke-width="1.3"/><path d="M5 10H14M5 10L1 15" stroke="#24365c" stroke-width="1.1" fill="none"/><path d="M12.5 8.5L15 10L12.5 11.5Z" fill="#6f7f9f"/><path d="M0.5 15.5L1 12.8L2.8 14.2Z" fill="#6f7f9f"/></svg>
<svg class="a" style="left:430px;top:9px" width="16" height="16" viewBox="0 0 16 16"><path d="M5 1V10" stroke="#1f2f52" stroke-width="1.3"/><path d="M5 10H14M5 10L1 15" stroke="#24365c" stroke-width="1.1" fill="none"/><path d="M12.5 8.5L15 10L12.5 11.5Z" fill="#6f7f9f"/><path d="M0.5 15.5L1 12.8L2.8 14.2Z" fill="#6f7f9f"/></svg>
<svg class="a" style="left:402px;top:9px" width="16" height="16" viewBox="0 0 16 16"><circle cx="8" cy="8" r="7.3" fill="none" stroke="#5a76a6" stroke-width="1"/><circle cx="8" cy="8" r="4.5" fill="none" stroke="#5a76a6" stroke-width="1"/><ellipse cx="8" cy="8" rx="1.6" ry="4.5" fill="none" stroke="#5a76a6" stroke-width="0.8"/></svg>
<svg class="a" style="left:456px;top:9px" width="16" height="16" viewBox="0 0 16 16"><rect x="4" y="6" width="6" height="6" fill="#587099"/><path d="M7 1V9L15 12M7 9L1 13" stroke="#23355a" stroke-width="1.2" fill="none"/></svg>
<svg class="a" style="left:485px;top:10px" width="13" height="14" viewBox="0 0 13 14"><path d="M0.5 1 L12 7 L0.5 13Z" fill="#6f86b0"/></svg>
<svg class="a" style="left:512px;top:10px" width="13" height="14" viewBox="0 0 13 14"><path d="M0.5 1 L12 7 L0.5 13Z" fill="#4fb648"/></svg>
<svg class="a" style="left:539px;top:10px" width="13" height="14" viewBox="0 0 13 14"><path d="M0.5 1 L12 7 L0.5 13Z" fill="#6f86b0"/></svg>
<svg class="a" style="left:564px;top:9px" width="16" height="16" viewBox="0 0 16 16"><path d="M1.5 1 L14 14" stroke="#c9d3e3" stroke-width="1.6"/><path d="M8 9 L14 15" stroke="#2d7ccf" stroke-width="2.6"/><path d="M10.5 5.5 L2 14" stroke="#fff" stroke-width="2.4"/><path d="M14 1 A3.5 3.5 0 1 0 15.5 5 L13 5 L11.5 3.5 L12 1Z" fill="#fff"/></svg>
<svg class="a" style="left:593px;top:12px" width="9" height="9" viewBox="0 0 9 9"><rect x="0.5" y="0.5" width="8" height="1.6" fill="#fff"/><path d="M0.5 3.5H8.5L4.5 7.5Z" fill="#fff"/></svg>
</body></html>
